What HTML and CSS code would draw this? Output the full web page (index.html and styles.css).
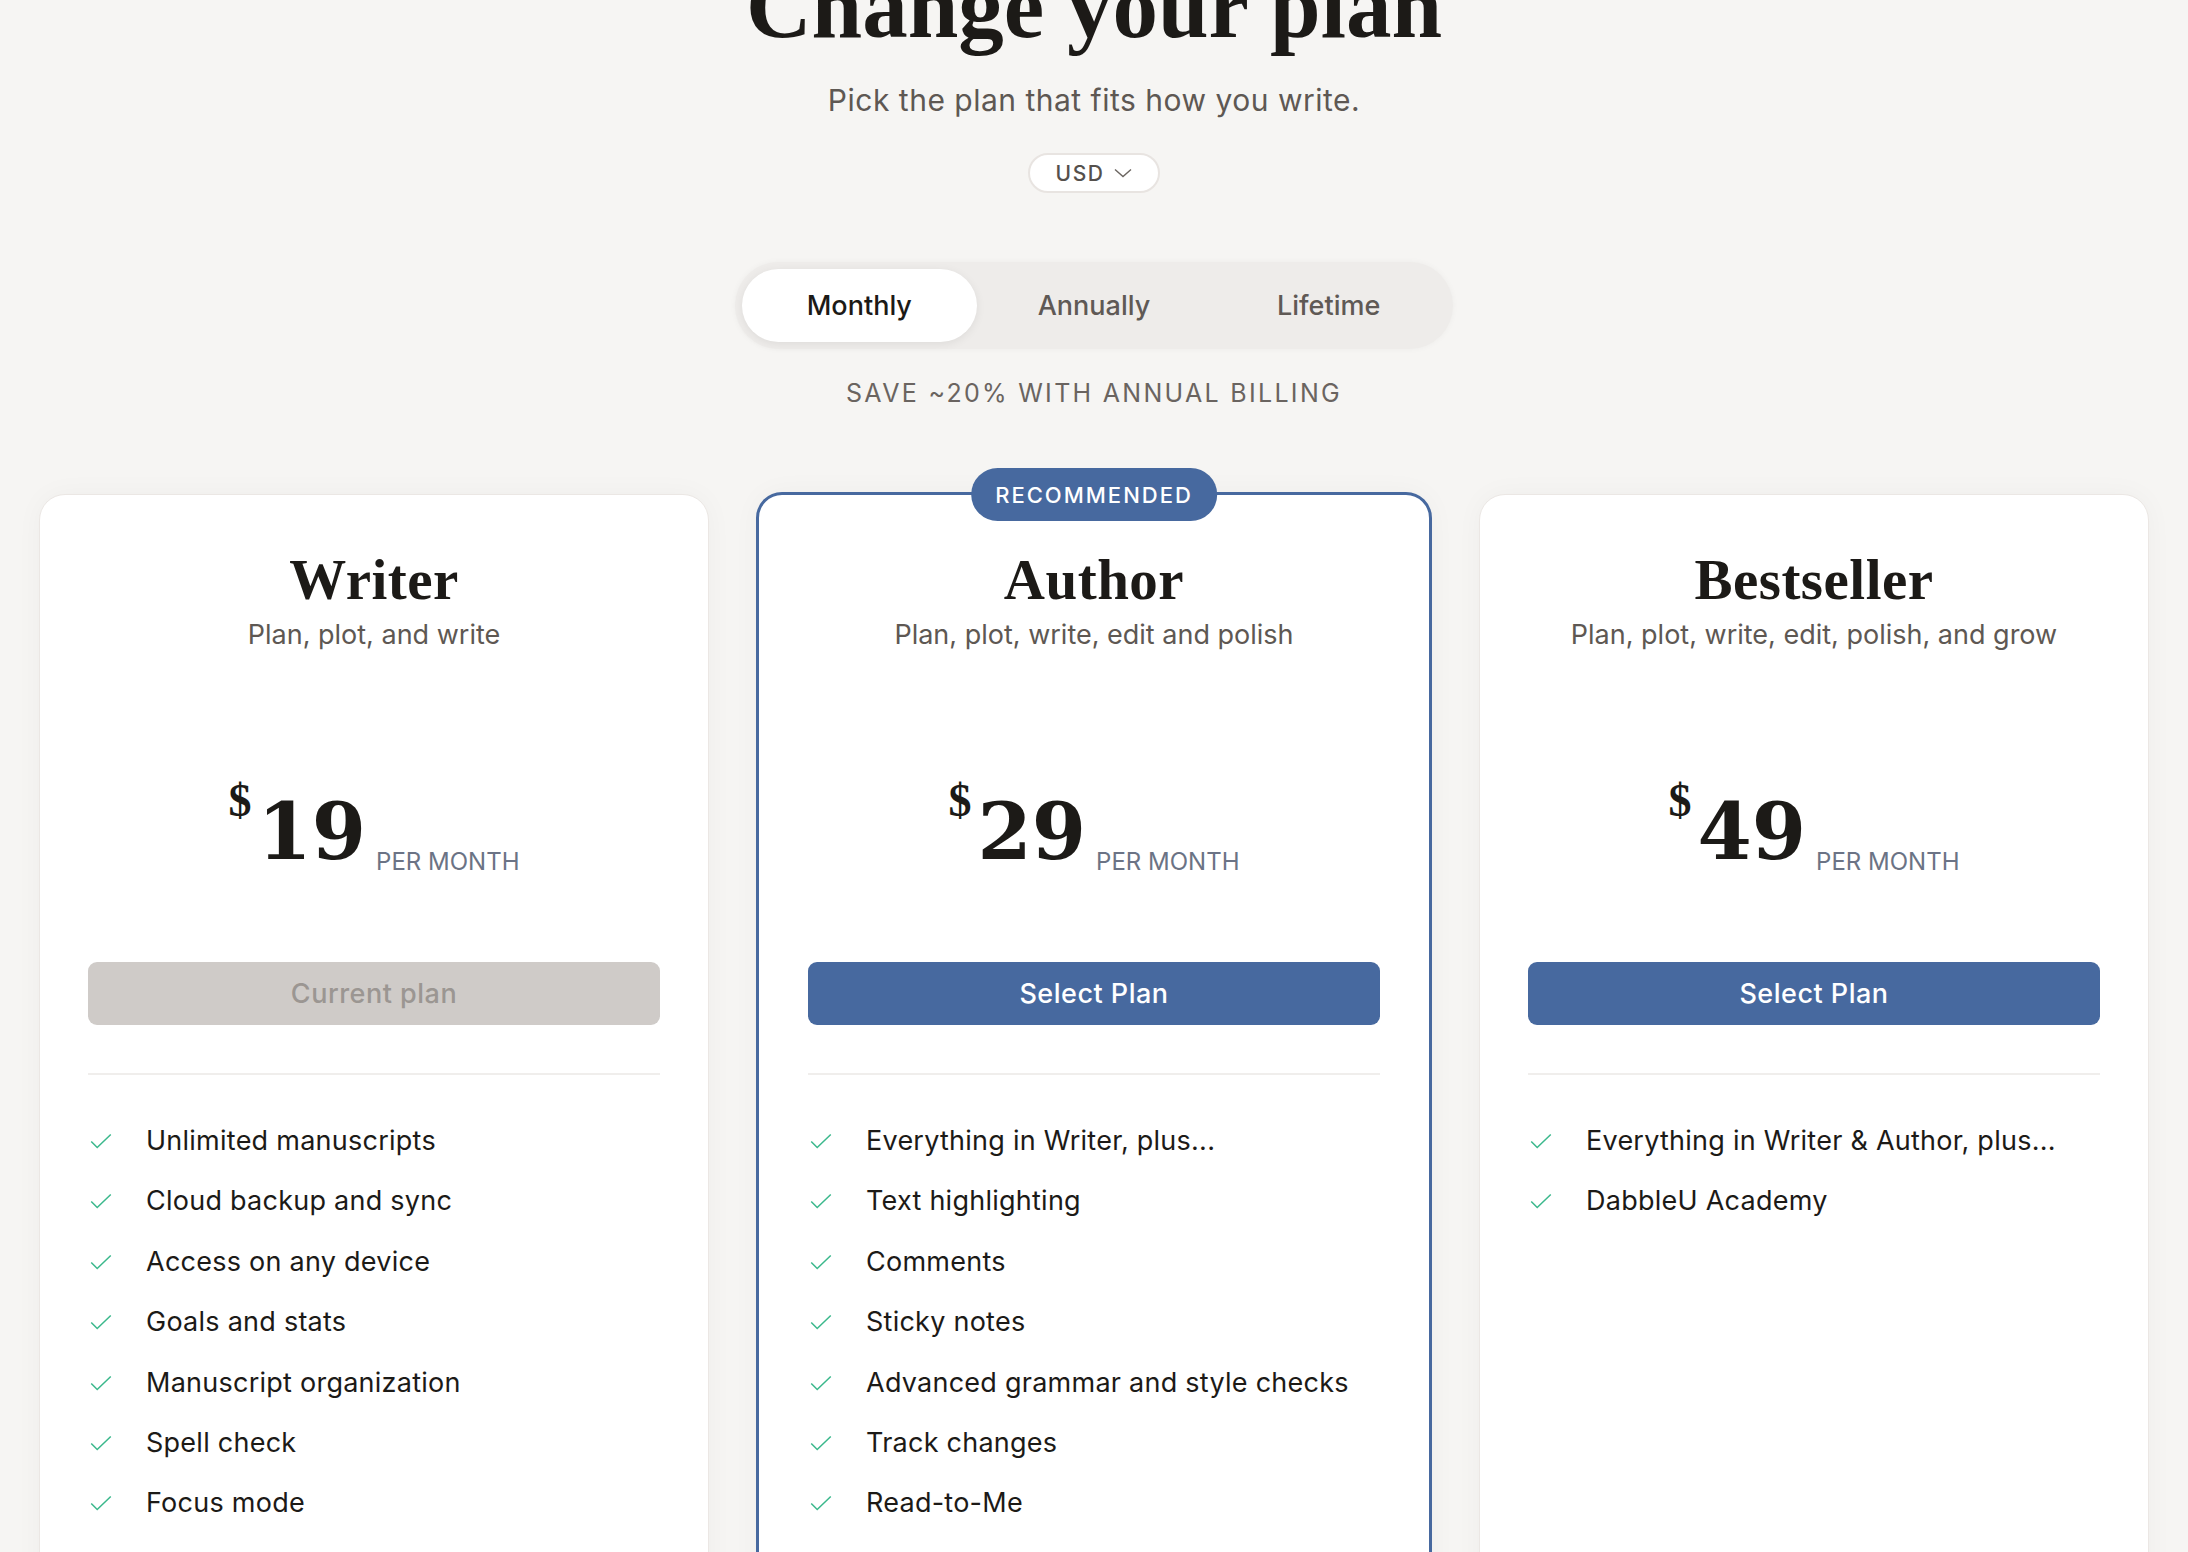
FILE: index.html
```html
<!DOCTYPE html>
<html lang="en">
<head>
    <meta charset="UTF-8">
    <meta name="viewport" content="width=device-width, initial-scale=1.0">
    <title>Change your plan</title>
    <link rel="stylesheet" href="styles.css">
</head>
<body>
    <main class="page">
        <header class="page-head">
            <h1>Change your plan</h1>
            <p class="lead">Pick the plan that fits how you write.</p>
            <button type="button" class="currency-select">USD
                <svg width="18" height="10" viewBox="0 0 18 10"><path d="M1 1.5l8 7 8-7" fill="none" stroke="#6b6560" stroke-width="1.4"/></svg>
            </button>
            <div class="billing-toggle">
                <button type="button" class="active">Monthly</button>
                <button type="button">Annually</button>
                <button type="button">Lifetime</button>
            </div>
            <p class="save-note">SAVE ~20% WITH ANNUAL BILLING</p>
        </header>

        <section class="plans">
            <div class="plan">
                <h2>Writer</h2>
                <p class="plan-desc">Plan, plot, and write</p>
                <div class="price"><span class="cur">$</span><span class="amount">19</span><span class="per">PER MONTH</span></div>
                <button type="button" class="plan-btn current">Current plan</button>
                <hr>
                <ul class="features">
                    <li><svg viewBox="0 0 24 24"><path d="M3 12.5l5.5 5.5L21 6"/></svg>Unlimited manuscripts</li>
                    <li><svg viewBox="0 0 24 24"><path d="M3 12.5l5.5 5.5L21 6"/></svg>Cloud backup and sync</li>
                    <li><svg viewBox="0 0 24 24"><path d="M3 12.5l5.5 5.5L21 6"/></svg>Access on any device</li>
                    <li><svg viewBox="0 0 24 24"><path d="M3 12.5l5.5 5.5L21 6"/></svg>Goals and stats</li>
                    <li><svg viewBox="0 0 24 24"><path d="M3 12.5l5.5 5.5L21 6"/></svg>Manuscript organization</li>
                    <li><svg viewBox="0 0 24 24"><path d="M3 12.5l5.5 5.5L21 6"/></svg>Spell check</li>
                    <li><svg viewBox="0 0 24 24"><path d="M3 12.5l5.5 5.5L21 6"/></svg>Focus mode</li>
                </ul>
            </div>

            <div class="plan featured">
                <span class="badge">RECOMMENDED</span>
                <h2>Author</h2>
                <p class="plan-desc">Plan, plot, write, edit and polish</p>
                <div class="price"><span class="cur">$</span><span class="amount">29</span><span class="per">PER MONTH</span></div>
                <button type="button" class="plan-btn">Select Plan</button>
                <hr>
                <ul class="features">
                    <li><svg viewBox="0 0 24 24"><path d="M3 12.5l5.5 5.5L21 6"/></svg>Everything in Writer, plus...</li>
                    <li><svg viewBox="0 0 24 24"><path d="M3 12.5l5.5 5.5L21 6"/></svg>Text highlighting</li>
                    <li><svg viewBox="0 0 24 24"><path d="M3 12.5l5.5 5.5L21 6"/></svg>Comments</li>
                    <li><svg viewBox="0 0 24 24"><path d="M3 12.5l5.5 5.5L21 6"/></svg>Sticky notes</li>
                    <li><svg viewBox="0 0 24 24"><path d="M3 12.5l5.5 5.5L21 6"/></svg>Advanced grammar and style checks</li>
                    <li><svg viewBox="0 0 24 24"><path d="M3 12.5l5.5 5.5L21 6"/></svg>Track changes</li>
                    <li><svg viewBox="0 0 24 24"><path d="M3 12.5l5.5 5.5L21 6"/></svg>Read-to-Me</li>
                </ul>
            </div>

            <div class="plan">
                <h2>Bestseller</h2>
                <p class="plan-desc">Plan, plot, write, edit, polish, and grow</p>
                <div class="price"><span class="cur">$</span><span class="amount">49</span><span class="per">PER MONTH</span></div>
                <button type="button" class="plan-btn">Select Plan</button>
                <hr>
                <ul class="features">
                    <li><svg viewBox="0 0 24 24"><path d="M3 12.5l5.5 5.5L21 6"/></svg>Everything in Writer &amp; Author, plus...</li>
                    <li><svg viewBox="0 0 24 24"><path d="M3 12.5l5.5 5.5L21 6"/></svg>DabbleU Academy</li>
                </ul>
            </div>
        </section>
    </main>
</body>
</html>
```

FILE: styles.css
```css
body {
    margin: 0;
    background-color: #f6f5f3;
    font-family: Inter, "Noto Sans", sans-serif;
    color: #1c1a17;
}
.page {
    display: flex;
    flex-direction: column;
    align-items: center;
}
.page-head {
    display: flex;
    flex-direction: column;
    align-items: center;
}
.page-head h1 {
    margin: -38px 0 0;
    font-family: "Liberation Serif", serif;
    font-weight: 700;
    font-size: 91px;
    line-height: 90px;
}
.lead {
    margin: 30px 0 0;
    font-size: 30px;
    line-height: 36px;
    letter-spacing: 0.5px;
    color: #5e5853;
}
.currency-select {
    margin-top: 35px;
    height: 40px;
    padding: 0 26px 0 26px;
    display: flex;
    align-items: center;
    gap: 10px;
    background: #fff;
    border: 2px solid #e8e4e1;
    border-radius: 20px;
    font-family: inherit;
    font-size: 21px;
    font-weight: 500;
    letter-spacing: 1.5px;
    color: #55504c;
}
.billing-toggle {
    margin-top: 69px;
    width: 718px;
    height: 87px;
    box-sizing: border-box;
    padding: 7px;
    display: grid;
    grid-template-columns: repeat(3, 1fr);
    background: #eeecea;
    border-radius: 44px;
    box-shadow: 0 0 6px rgba(0, 0, 0, 0.04);
}
.billing-toggle button {
    border: none;
    background: transparent;
    border-radius: 37px;
    font-family: inherit;
    font-size: 27px;
    font-weight: 500;
    color: #5f5955;
}
.billing-toggle button.active {
    background: #fff;
    color: #1c1a17;
    box-shadow: 0 2px 10px rgba(0, 0, 0, 0.07);
}
.save-note {
    margin: 28px 0 0;
    font-size: 25px;
    line-height: 32px;
    letter-spacing: 2.3px;
    color: #6a6460;
}

.plans {
    margin-top: 85px;
    display: grid;
    grid-template-columns: 670px 676px 670px;
    gap: 47px;
}
.plan {
    position: relative;
    min-height: 1100px;
    box-sizing: border-box;
    padding: 53px 48px 60px;
    display: flex;
    flex-direction: column;
    background: #fff;
    border: 1px solid #ebe7e4;
    border-radius: 26px;
    box-shadow: 0 0 28px rgba(0, 0, 0, 0.035);
}
.plan.featured {
    border: 3px solid #47699f;
    padding: 53px 49px 58px;
    margin-top: -2px;
}
.badge {
    position: absolute;
    top: -27px;
    left: 50%;
    transform: translateX(-50%);
    height: 53px;
    padding: 0 24px;
    display: flex;
    align-items: center;
    background: #47699f;
    color: #fff;
    border-radius: 27px;
    font-size: 22px;
    font-weight: 500;
    letter-spacing: 2px;
    white-space: nowrap;
}
.plan h2 {
    margin: 0;
    text-align: center;
    font-family: "Liberation Serif", serif;
    font-weight: 700;
    font-size: 57px;
    line-height: 64px;
    letter-spacing: 0.5px;
}
.plan-desc {
    margin: 5px 0 0;
    text-align: center;
    font-size: 27px;
    line-height: 36px;
    color: #5e5853;
}
.price {
    margin-top: 129px;
    display: flex;
    justify-content: center;
    align-items: flex-start;
}
.price .cur {
    margin: -4px 6px 0 0;
    font-family: "Liberation Serif", serif;
    font-weight: 700;
    font-size: 46px;
    line-height: 46px;
}
.price .amount {
    font-family: "DejaVu Serif", serif;
    font-weight: 700;
    font-size: 78px;
    line-height: 100px;
}
.price .per {
    margin: 68px 0 0 10px;
    font-size: 24px;
    line-height: 24px;
    color: #6b7385;
}
.plan-btn {
    margin-top: 80px;
    height: 63px;
    border: none;
    border-radius: 9px;
    background: #47699f;
    color: #fff;
    font-family: inherit;
    font-size: 27px;
    font-weight: 500;
    letter-spacing: 0.5px;
}
.plan-btn.current {
    background: #cfcbc8;
    color: #9b9692;
}
.plan hr {
    margin: 48px 0 0;
    border: none;
    border-top: 2px solid #f0eeec;
}
.features {
    list-style: none;
    margin: 48px 0 0;
    padding: 0;
    display: flex;
    flex-direction: column;
    gap: 24.4px;
}
.features li {
    display: flex;
    align-items: center;
    gap: 32px;
    font-size: 27px;
    line-height: 36px;
    letter-spacing: 0.25px;
}
.features svg {
    width: 26px;
    height: 26px;
    flex: none;
    fill: none;
    stroke: #3bb88c;
    stroke-width: 1.4;
}
```
